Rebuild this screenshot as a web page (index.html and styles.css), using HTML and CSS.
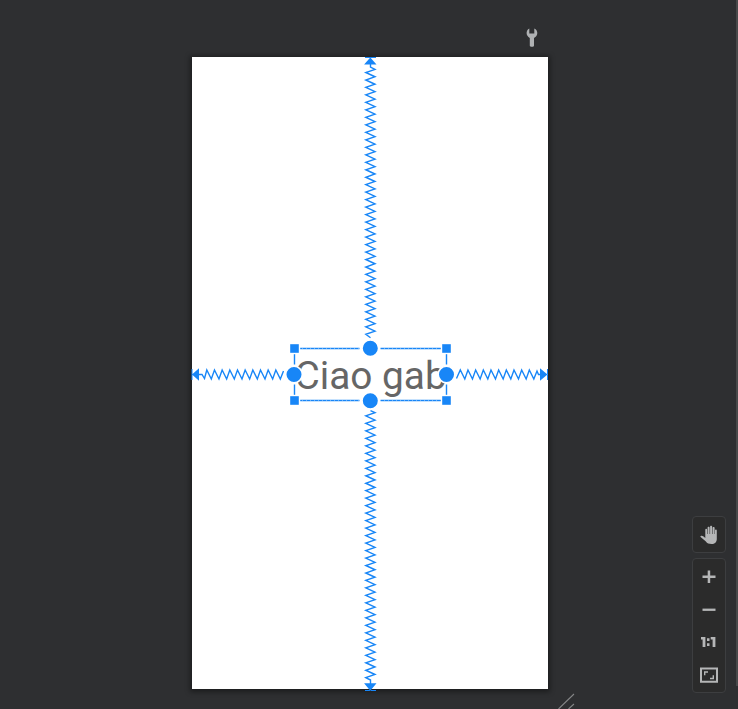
FILE: index.html
```html
<!DOCTYPE html>
<html lang="it">
<head>
<meta charset="utf-8">
<title>Layout editor</title>
<link rel="stylesheet" href="styles.css">
</head>
<body>
<main class="surface">
  <div class="screen"></div>
  <div class="label">Ciao gab</div>
  <svg class="overlay" viewBox="0 0 738 709">
    <g class="spring">
      <path id="spring-top"/>
      <path id="spring-bottom"/>
      <path id="spring-left"/>
      <path id="spring-right"/>
    </g>
    <g class="fill">
      <path d="M370.3 57.5l6.2 7h-12.4zM365 57h11v1h-11z"/>
      <path d="M370.3 690.8l6.2-7.5h-12.4zM365 690h11v1h-11z"/>
      <path d="M192 374.5l7-6.3v12.6zM191.500 369h1v11h-1z"/>
      <path d="M547.500 374.500l-7.500-6.300v12.600zM547 369h1v11h-1z"/>
    </g>
    <path class="bounds" d="M299 348.500H359.500M380.500 348.500H442M299 400.500H359.500M380.500 400.500H442M294.500 353V364.500M294.500 384.500V396M446.500 353V364.500M446.500 384.500V396"/>
    <path class="dash" d="M302 348.500H359M384 348.500H440M302 400.500H359M384 400.500H440"/>
    <g class="corner">
      <rect x="289.500" y="343.500" width="10" height="10"/>
      <rect x="441.500" y="343.500" width="10" height="10"/>
      <rect x="289.500" y="395.500" width="10" height="10"/>
      <rect x="441.500" y="395.500" width="10" height="10"/>
    </g>
    <g class="anchor">
      <circle cx="370.300" cy="348.300" r="8.300"/>
      <circle cx="370.300" cy="400.700" r="8.300"/>
      <circle cx="294" cy="374.500" r="8.300"/>
      <circle cx="446.500" cy="374.500" r="8.300"/>
    </g>
    <path class="wrench" d="M529.300 28.400v5h5V28.400c1.900.8 3 2.600 3 4.600 0 2.200-1.200 3.900-3.300 4.900v7.600c0 .8-.6 1.200-1.200 1.200h-1.800c-.7 0-1.200-.5-1.200-1.200v-7.600c-2-1-3.200-2.800-3.200-4.900 0-2 1-3.800 2.700-4.600z"/>
    <path class="grip" d="M558.500 709L574 694M568.500 709L574 704"/>
  </svg>
  <div class="tools">
    <div class="tool-box">
      <svg class="icon" viewBox="0 0 20 20"><path d="M5.300 9V4.700c0-.6.300-1 .9-1s.9.400.9 1V9h.5V2.700c0-.6.400-1 1-1s1 .4 1 1V9h.5V1.800c0-.6.400-1 1-1s1 .4 1 1V9h.5V2.900c0-.6.400-1 1-1s1 .4 1 1V9h.4V5.500c0-.6.300-1 .9-1s.9.400.9 1v8.600c0 3.100-2 5-5.200 5-2.800 0-4.500-.7-5.700-2.500L.6 12.100c-.4-.6-.1-1.200.5-1.400.8-.2 1.500 0 2.100.6l2.100 1.800z" transform="translate(1 0)"/></svg>
    </div>
    <div class="tool-box zoom">
      <svg class="icon" viewBox="0 0 20 20"><path d="M8.700 3.500h2.500v5h5.300v2.500h-5.300v5H8.700v-5H3.500V8.500h5.200z"/></svg>
      <svg class="icon" viewBox="0 0 20 20"><path d="M3.500 8.600h13v2.300h-13z"/></svg>
      <svg class="icon" viewBox="0 0 20 20"><path d="M2 5h4.400v10H3.600V7.500H2zM11.700 5h4.700v10h-2.800V7.500h-1.900zM8 6.200h2.500v2.700H8zM8 11.300h2.500V14H8z"/></svg>
      <svg class="icon" viewBox="0 0 20 20"><path fill-rule="evenodd" d="M1 2.500h18v15.300H1zM3 4.500v11.300h14V4.500zM5 6.300h4v1.400H6.400v2.600H5zM15 10.200v4h-4v-1.400h2.600v-2.600z"/></svg>
    </div>
  </div>
  <div class="scrollbar"></div>
</main>
<script src="springs.js"></script>
</body>
</html>
```
FILE: styles.css
```css
html, body { margin: 0; height: 100%; }
body { background: #2e2f31; overflow: hidden; }
.surface {
  position: relative;
  width: 738px;
  height: 709px;
  background: #2e2f31;
  overflow: hidden;
}
.screen {
  position: absolute;
  left: 192px;
  top: 57px;
  width: 356px;
  height: 632px;
  background: #fff;
  box-shadow: 0 1px 5px 2px rgba(0, 0, 0, .4);
}
.label {
  position: absolute;
  left: 294.500px;
  top: 353px;
  width: 152px;
  font: 38.8px/46px Roboto, sans-serif;
  color: #666;
  white-space: nowrap;
}
.overlay { position: absolute; left: 0; top: 0; width: 738px; height: 709px; }
.spring { fill: none; stroke: #1886f7; stroke-width: 1.4; }
.fill { fill: #1886f7; }
.bounds { stroke: #1886f7; stroke-width: 1.4; }
.dash { stroke: #69b0fa; stroke-width: 1.2; stroke-dasharray: 1 3; }
.corner { fill: #1886f7; stroke: #fff; stroke-width: 1.4; }
.anchor { fill: #1886f7; stroke: #fff; stroke-width: 1.6; }
.wrench { fill: #afb1b3; }
.grip { stroke: #858687; stroke-width: 1.1; }
.tools {
  position: absolute;
  left: 692px;
  top: 516px;
  display: flex;
  flex-direction: column;
  gap: 5px;
}
.tool-box {
  box-sizing: border-box;
  width: 34px;
  height: 37px;
  border: 1px solid #3d3e40;
  border-radius: 4px;
  background: #2b2b2b;
  display: flex;
  flex-direction: column;
  align-items: center;
  justify-content: center;
}
.zoom { height: 135px; justify-content: flex-start; gap: 12.7px; padding-top: 8px; }
.icon { width: 20px; height: 20px; flex: none; fill: #b5b6b7; }
.scrollbar { position: absolute; right: 0; top: 0; width: 2px; height: 686px; background: #48494a; }
```
FILE: springs.js
```javascript
// Vertical springs: teeth run downwards, alternating left and right edges.
function verticalSpring(id, start, firstLeft, end) {
  let d = start;
  for (let i = 0; i < 36; i++) {
    const y = firstLeft + i * 7.480;
    d += `L375 ${y - 3.200}L365.800 ${y}`;
  }
  document.getElementById(id).setAttribute('d', d + end);
}

// Horizontal springs: peaks alternate with troughs around the centre line.
function horizontalSpring(id, start, firstPeak, count, end) {
  let d = start;
  for (let i = 0; i < count; i++) {
    const x = firstPeak + i * 7.670;
    d += `L${x} 370L${x + 4.500} 379`;
  }
  document.getElementById(id).setAttribute('d', d + end);
}

verticalSpring('spring-top', 'M370.500 63V67', 72.500, 'L370.500 337.700');
verticalSpring('spring-bottom', 'M370.500 410.700', 415.900, 'L370.500 680V684');
horizontalSpring('spring-left', 'M199 374.500H202L204.500 378.500', 206.800, 10, 'L283.500 371');
horizontalSpring('spring-right', 'M456.500 378.500', 460.300, 10, 'L537 371L538.500 374.500H541');
```
